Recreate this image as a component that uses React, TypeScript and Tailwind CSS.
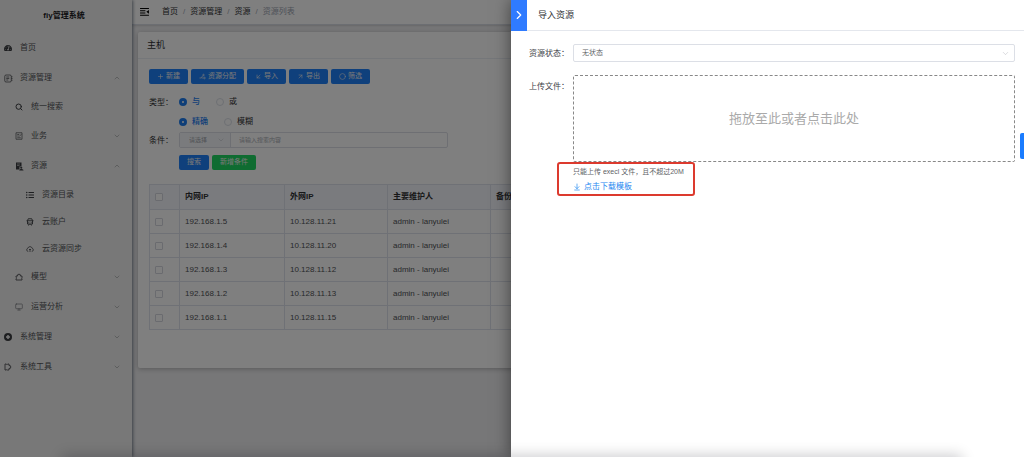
import React from "react";
import {
  ArrowDownLeft,
  ArrowDownToLine,
  ArrowUpRight,
  ChevronDown,
  ChevronRight,
  ChevronUp,
  Circle,
  Monitor,
  Plus,
  Search,
} from "lucide-react";
import { FaListUl, FaTachometerAlt } from "react-icons/fa";

type MenuItem = {
  label: string;
  icon: React.ReactNode;
  level: 0 | 1 | 2;
  arrow?: "up" | "down";
};

const PuzzleIcon: React.FC<{ className?: string }> = ({ className }) => (
  <svg
    width="8"
    height="8"
    viewBox="0 0 16 16"
    fill="none"
    stroke="currentColor"
    strokeWidth="1.6"
    className={className}
  >
    <path d="M2 6h3.2a2.9 2.9 0 1 1 5.6 0H14v3.2a1.8 1.8 0 0 0 0 2.6V14H2v-2.4a1.8 1.8 0 0 0 0-3.2z" />
  </svg>
);

const NotebookIcon: React.FC = () => (
  <svg
    width="9"
    height="9"
    viewBox="0 0 18 18"
    fill="none"
    stroke="currentColor"
    strokeWidth="1.4"
  >
    <rect x="1.5" y="2" width="13" height="14" rx="2.5" />
    <path d="M4.5 6h6M4.5 9h6M4.5 12h4M14.5 5.5H17M14.5 9H17M14.5 12.5H17" />
  </svg>
);

const NoteIcon: React.FC = () => (
  <svg
    width="8"
    height="8"
    viewBox="0 0 16 16"
    fill="none"
    stroke="currentColor"
    strokeWidth="1.3"
  >
    <path d="M2 1.5h12v13H2zM4.5 5h4M4.5 8h3M4.5 11.5h7M8.5 9l4-4.5" />
  </svg>
);

const ResourceIcon: React.FC = () => (
  <svg width="9" height="9" viewBox="0 0 18 18" fill="currentColor">
    <path d="M2 1h11v8H9v6H2z" />
    <path d="M4 4h6M4 7h5" stroke="#f1f1f1" strokeWidth="1.1" />
    <circle cx="12.5" cy="11.5" r="2.2" />
    <path d="M8.5 17c0-2 1.8-3 4-3s4.5 1 4.5 3z" />
  </svg>
);

const AccountIcon: React.FC = () => (
  <svg
    width="8"
    height="8"
    viewBox="0 0 16 16"
    fill="none"
    stroke="currentColor"
    strokeWidth="1.8"
  >
    <path d="M1 5.5h14M3 5.5 4.5 1.5h7L13 5.5M3 6v6h10V6M5 15l1.5-3M11 15l-1.5-3" />
    <path d="M5 9h1.5M9.5 9H11" />
  </svg>
);

const CloudSyncIcon: React.FC = () => (
  <svg
    width="8"
    height="8"
    viewBox="0 0 16 16"
    fill="none"
    stroke="currentColor"
    strokeWidth="1.4"
  >
    <path d="M4.5 13a3.4 3.4 0 0 1-.8-6.6 4.5 4.5 0 0 1 8.6 0 3.4 3.4 0 0 1-.8 6.6" />
    <path d="M8 14V8M6 10l2-2 2 2" />
  </svg>
);

const HelpIcon: React.FC = () => (
  <svg width="8" height="8" viewBox="0 0 16 16" fill="currentColor">
    <circle cx="8" cy="8" r="8" />
    <path d="M6.5 4h3v2.5H12v3H9.5V12h-3V9.5H4v-3h2.5z" fill="#f1f1f1" />
  </svg>
);

const AssignIcon: React.FC = () => (
  <svg
    width="7"
    height="7"
    viewBox="0 0 14 14"
    fill="none"
    stroke="currentColor"
    strokeWidth="1.3"
  >
    <path d="M1 10h3l4-5M5 10h4" />
    <circle cx="9" cy="4" r="1.5" />
    <circle cx="11" cy="10" r="1.6" />
  </svg>
);

const menu: MenuItem[] = [
  { label: "首页", icon: <FaTachometerAlt size={8} />, level: 0 },
  { label: "资源管理", icon: <NotebookIcon />, level: 0, arrow: "up" },
  { label: "统一搜索", icon: <Search size={8} strokeWidth={3} />, level: 1 },
  { label: "业务", icon: <NoteIcon />, level: 1, arrow: "down" },
  { label: "资源", icon: <ResourceIcon />, level: 1, arrow: "up" },
  { label: "资源目录", icon: <FaListUl size={8} />, level: 2 },
  { label: "云账户", icon: <AccountIcon />, level: 2 },
  { label: "云资源同步", icon: <CloudSyncIcon />, level: 2 },
  { label: "模型", icon: <PuzzleIcon />, level: 1, arrow: "down" },
  {
    label: "运营分析",
    icon: <Monitor size={8} className="text-[#77797e]" />,
    level: 1,
    arrow: "down",
  },
  { label: "系统管理", icon: <HelpIcon />, level: 0, arrow: "down" },
  {
    label: "系统工具",
    icon: <PuzzleIcon className="rotate-90" />,
    level: 0,
    arrow: "down",
  },
];

const indent = ["h-[30px] pl-1", "h-7 pl-[15px]", "h-[27px] pl-[26px]"];

const actions = [
  { label: "新建", icon: <Plus size={7} /> },
  { label: "资源分配", icon: <AssignIcon /> },
  { label: "导入", icon: <ArrowDownLeft size={7} /> },
  { label: "导出", icon: <ArrowUpRight size={7} /> },
  { label: "筛选", icon: <Circle size={7} /> },
];

const hosts = [
  { inner: "192.168.1.5", outer: "10.128.11.21", owner: "admin - lanyulei" },
  { inner: "192.168.1.4", outer: "10.128.11.20", owner: "admin - lanyulei" },
  { inner: "192.168.1.3", outer: "10.128.11.12", owner: "admin - lanyulei" },
  { inner: "192.168.1.2", outer: "10.128.11.13", owner: "admin - lanyulei" },
  { inner: "192.168.1.1", outer: "10.128.11.15", owner: "admin - lanyulei" },
];

const Sidebar: React.FC = () => (
  <aside className="w-[132px] shrink-0 bg-[#f1f1f1] shadow-[1px_0_3px_rgba(0,21,41,0.5)] z-10">
    <h1 className="h-[33px] pr-2 pl-1 leading-8 text-center text-[8px] font-bold text-[#191a23]">
      fiy管理系统
    </h1>
    <nav>
      <ul>
        {menu.map((item) => (
          <li key={item.label}>
            <a
              href="#"
              className={`flex items-center pr-[11px] text-[#505256] ${
                indent[item.level]
              } ${item.arrow ? "min-h-[30px]" : ""}`}
            >
              <span className="w-4 text-[#3c3e42]">{item.icon}</span>
              <span className="flex-1 text-[8px]">{item.label}</span>
              {item.arrow === "up" && <ChevronUp size={8} strokeWidth={1} />}
              {item.arrow === "down" && (
                <ChevronDown size={8} strokeWidth={1} />
              )}
            </a>
          </li>
        ))}
      </ul>
    </nav>
  </aside>
);

const Header: React.FC = () => (
  <header className="h-[25px] flex items-center gap-[13px] px-2 bg-white border-b border-[#d8dce5] shadow-sm">
    <button type="button" aria-label="折叠菜单" className="text-black">
      <svg width="9" height="8" viewBox="0 0 10 9" fill="currentColor">
        <path d="M0 0h10v1.2H0zM0 2.5h6v1.2H0zM0 5h6v1.2H0zM0 7.5h10v1.2H0zM10 2.2v4.2L7 4.3z" />
      </svg>
    </button>
    <ol className="flex items-center text-[8px] text-[#303133]">
      <li>首页</li>
      <li className="mx-[5px] text-[#a0a5b0]">/</li>
      <li>资源管理</li>
      <li className="mx-[5px] text-[#a0a5b0]">/</li>
      <li>资源</li>
      <li className="mx-[5px] text-[#a0a5b0]">/</li>
      <li className="text-[#9ba3b0]">资源列表</li>
    </ol>
  </header>
);

type RadioProps = {
  name: string;
  label: string;
  defaultChecked?: boolean;
};

const Radio: React.FC<RadioProps> = ({ name, label, defaultChecked }) => (
  <label className="flex items-center gap-[5px] has-checked:text-[#1d7df0] has-checked:font-medium">
    <input
      type="radio"
      name={name}
      defaultChecked={defaultChecked}
      className="appearance-none size-2 rounded-full border border-[#dcdfe6] checked:border-[3px] checked:border-[#1d7df0]"
    />
    {label}
  </label>
);

const Filters: React.FC = () => (
  <form className="mt-2 grid grid-cols-[30px_1fr] text-[8px] text-[#303133]">
    <span className="h-5 leading-5 pt-px whitespace-nowrap">类型：</span>
    <div className="h-5 flex items-center gap-4">
      <Radio name="type" label="与" defaultChecked />
      <Radio name="type" label="或" />
    </div>
    <div className="col-start-2 h-5 flex items-center gap-4">
      <Radio name="match" label="精确" defaultChecked />
      <Radio name="match" label="模糊" />
    </div>
    <label htmlFor="keyword" className="h-4 leading-4 pt-px whitespace-nowrap">
      条件：
    </label>
    <div className="flex h-4 w-[269px] border border-[#dcdfe6] rounded-xs text-[6px]">
      <div className="relative w-[51px] bg-[#f5f7fa] border-r border-[#dcdfe6] text-[#a0a4ac]">
        <select
          aria-label="条件字段"
          className="appearance-none size-full pl-[9px] outline-none"
        >
          <option>请选择</option>
        </select>
        <ChevronDown
          size={8}
          strokeWidth={1}
          className="absolute right-[5px] top-[3px]"
        />
      </div>
      <input
        id="keyword"
        placeholder="请输入搜索内容"
        className="flex-1 px-2 outline-none placeholder:text-[#a8abb2]"
      />
    </div>
    <div className="col-start-2 mt-[7px] flex gap-[3px] text-[7px] text-[#f0f0f0]">
      <button type="button" className="h-[15px] px-2 rounded-xs bg-[#1f80f8]">
        搜索
      </button>
      <button type="button" className="h-[15px] px-2 rounded-xs bg-[#1fd862]">
        新增条件
      </button>
    </div>
  </form>
);

const checkbox =
  "appearance-none block size-2 border border-[#d4d7de] bg-white rounded-[1px]";
const cell = "border border-[#dfe3ec] px-[5px]";

const HostTable: React.FC = () => (
  <table className="mt-[14px] w-full table-fixed border-collapse text-left text-[8px] leading-[10px] text-[#505256]">
    <colgroup>
      <col className="w-[30px]" />
      <col className="w-[105px]" />
      <col className="w-[103px]" />
      <col className="w-[103px]" />
      <col />
      <col />
    </colgroup>
    <thead>
      <tr className="h-[25px] bg-[#f5f7fd] text-[#303133]">
        <th className={cell}>
          <input type="checkbox" aria-label="全选" className={checkbox} />
        </th>
        <th className={cell}>内网IP</th>
        <th className={cell}>外网IP</th>
        <th className={cell}>主要维护人</th>
        <th className={cell}>备份维护人</th>
        <th className={cell}>备注</th>
      </tr>
    </thead>
    <tbody>
      {hosts.map((host) => (
        <tr key={host.inner} className="h-6">
          <td className={cell}>
            <input
              type="checkbox"
              aria-label={host.inner}
              className={checkbox}
            />
          </td>
          <td className={cell}>{host.inner}</td>
          <td className={cell}>{host.outer}</td>
          <td className={cell}>{host.owner}</td>
          <td className={cell} />
          <td className={cell} />
        </tr>
      ))}
    </tbody>
  </table>
);

const ImportDrawer: React.FC = () => (
  <section
    role="dialog"
    aria-label="导入资源"
    className="absolute inset-y-0 right-0 w-[513px] max-w-full bg-white shadow-[0_0_16px_rgba(0,0,0,0.5)]"
  >
    <header className="h-[31px] flex items-center border-b border-[#e4e7ed]">
      <button
        type="button"
        aria-label="关闭"
        className="h-[31px] w-4 flex items-center justify-center bg-[#2f7bff] text-white"
      >
        <ChevronRight size={14} strokeWidth={2} />
      </button>
      <h2 className="ml-[11px] pt-px text-[9px] text-[#303133]">导入资源</h2>
    </header>
    <form className="pt-[13px] pl-[18px] pr-[9px] grid grid-cols-[44px_1fr] gap-y-[13px] text-[8px] text-[#404246]">
      <label htmlFor="status" className="leading-5 whitespace-nowrap">
        资源状态：
      </label>
      <div className="relative h-[18px]">
        <select
          id="status"
          className="appearance-none size-full px-2 border border-[#dcdfe6] rounded-xs text-[7px] text-[#606266] outline-none"
        >
          <option>无状态</option>
        </select>
        <ChevronDown
          size={9}
          strokeWidth={1}
          className="absolute right-[5px] top-[5px] text-[#a0a4ac]"
        />
      </div>
      <label htmlFor="file" className="leading-5 whitespace-nowrap">
        上传文件：
      </label>
      <div className="-mt-[2px]">
        <label className="h-[87px] flex items-center justify-center border border-dashed border-[#888888] rounded-xs text-[13px] text-[#aaaaaa]">
          <input id="file" type="file" className="sr-only" />
          拖放至此或者点击此处
        </label>
        <div className="relative pt-[3px] text-[#606266]">
          <p className="text-[7px] leading-[13px]">
            只能上传 execl 文件，且不超过20M
          </p>
          <a
            href="#"
            className="mt-[3px] w-fit flex items-center gap-[3px] leading-3 text-[#1d86f0]"
          >
            <ArrowDownToLine size={8} />
            点击下载模板
          </a>
          <div className="absolute -left-4 top-0 w-[138px] h-[34px] border-2 border-[#dc3a2e] rounded-[3px] pointer-events-none" />
        </div>
      </div>
    </form>
    <button
      type="button"
      aria-label="设置"
      className="absolute right-0 top-[133px] h-[26px] w-1 rounded-l-xs bg-[#1a7cff]"
    />
  </section>
);

const App: React.FC = () => {
  return (
    <div className="relative flex min-h-screen overflow-hidden bg-[#eeeef0] font-['Liberation_Sans','Noto_Sans_CJK_SC',sans-serif]">
      <Sidebar />
      <div className="flex-1 min-w-0">
        <Header />
        <main className="p-[6px]">
          <div className="mt-px bg-white rounded-xs shadow-[0_1px_5px_rgba(0,0,0,0.25)]">
            <h2 className="h-[27px] pl-[9px] leading-[27px] border-b border-[#ebeef5] text-[9px] text-[#303133]">
              主机
            </h2>
            <div className="px-[11px] pt-[10px] pb-[38px]">
              <div className="flex gap-[3px] text-[7px] text-[#f0f0f0]">
                {actions.map((action) => (
                  <button
                    key={action.label}
                    type="button"
                    className="h-[15px] px-2 flex items-center gap-[2px] rounded-xs bg-[#1f80f8]"
                  >
                    {action.icon}
                    {action.label}
                  </button>
                ))}
              </div>
              <Filters />
              <HostTable />
            </div>
          </div>
        </main>
      </div>
      <div className="absolute inset-0 z-20 bg-black/50">
        <ImportDrawer />
        <div className="absolute inset-x-16 top-full h-4 shadow-[0_0_14px_2px_rgba(0,0,20,0.2)]" />
      </div>
    </div>
  );
};

export default App;
